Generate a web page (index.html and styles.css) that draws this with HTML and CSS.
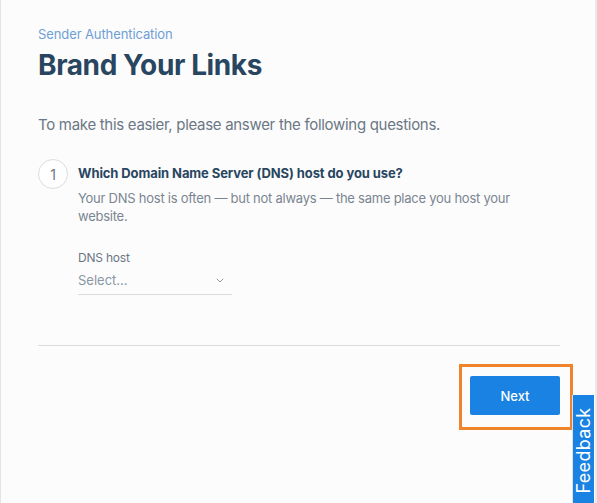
FILE: index.html
```html
<!DOCTYPE html>
<html>
<head>
<meta charset="utf-8">
<link rel="stylesheet" href="styles.css">
</head>
<body>
<div class="page">
  <main class="content">
    <div class="eyebrow">Sender Authentication</div>
    <h1 class="title">Brand Your Links</h1>
    <p class="intro">To make this easier, please answer the following questions.</p>
    <div class="step">
      <div class="step-num">1</div>
      <div class="step-body">
        <div class="question">Which Domain Name Server (DNS) host do you use?</div>
        <div class="desc">Your DNS host is often — but not always — the same place you host your website.</div>
        <div class="field">
          <div class="label">DNS host</div>
          <div class="select">
            <span>Select...</span>
            <svg class="chev" width="8" height="5" viewBox="0 0 8 5"><path d="M0.8 0.8 L4 4 L7.2 0.8" fill="none" stroke="#8a96a3" stroke-width="1"/></svg>
          </div>
        </div>
      </div>
    </div>
    <hr class="divider">
    <div class="actions">
      <div class="highlight"><button class="next">Next</button></div>
    </div>
  </main>
  <div class="feedback"><span>Feedback</span></div>
</div>
</body>
</html>
```
FILE: styles.css
```css
html, body {
  margin: 0;
  padding: 0;
  height: 100%;
}
body {
  background: #fcfcfc;
  font-family: "Inter", "Liberation Sans", sans-serif;
  overflow: hidden;
}
.page {
  position: relative;
  height: 503px;
  border-left: 1px solid #e4e4e4;
  border-right: 2px solid #e9e9e9;
  box-sizing: border-box;
}
.content {
  padding: 26px 37px 0 37px;
  width: 522px;
}
.eyebrow {
  font-size: 13px;
  color: #6f9ed6;
  line-height: 16px;
  letter-spacing: -0.1px;
}
.title {
  margin: 6px 0 0 0;
  font-size: 28px;
  line-height: 34px;
  font-weight: 700;
  color: #294661;
  letter-spacing: -0.4px;
}
.intro {
  margin: 33px 0 0 0;
  font-size: 15px;
  line-height: 20px;
  color: #6b7785;
  letter-spacing: -0.3px;
}
.step {
  display: flex;
  gap: 10px;
  margin-top: 24px;
}
.step-num {
  width: 28px;
  height: 28px;
  border: 1px solid #dcdcdc;
  border-radius: 50%;
  display: flex;
  align-items: center;
  justify-content: center;
  font-size: 14px;
  color: #6b7785;
  flex: none;
  background: #fff;
}
.step-body {
  padding-top: 6px;
  width: 440px;
}
.question {
  font-size: 13px;
  font-weight: 700;
  color: #294661;
  line-height: 16px;
  letter-spacing: -0.1px;
}
.desc {
  margin-top: 8px;
  font-size: 13px;
  line-height: 18px;
  color: #7a8591;
  letter-spacing: -0.25px;
}
.field {
  margin-top: 26px;
  width: 154px;
}
.label {
  font-size: 12px;
  line-height: 14px;
  color: #6b7785;
  letter-spacing: -0.2px;
}
.select {
  margin-top: 7px;
  display: flex;
  justify-content: space-between;
  align-items: center;
  font-size: 13px;
  color: #8a96a3;
  padding-bottom: 6px;
  border-bottom: 1px solid #dcdcdc;
}
.chev {
  margin-right: 8px;
}
.divider {
  margin: 50px 0 0 0;
  border: 0;
  border-top: 1px solid #dcdcdc;
}
.actions {
  display: flex;
  justify-content: flex-end;
  margin-top: 18px;
  margin-right: -13px;
}
.highlight {
  border: 3px solid #f0842c;
  padding: 9px 10px 12px 8px;
}
.next {
  width: 90px;
  height: 39px;
  background: #1a82e2;
  color: #fff;
  border: 0;
  border-radius: 2px;
  font-family: inherit;
  font-size: 13px;
  font-weight: 500;
}
.feedback {
  position: absolute;
  left: 571px;
  top: 395px;
  width: 21px;
  height: 108px;
  background: #1a82e2;
  border-left: 1px solid #e0e0e0;
  display: flex;
  align-items: center;
  justify-content: center;
}
.feedback span {
  transform: rotate(-90deg);
  color: #fff;
  font-size: 18px;
  white-space: nowrap;
  letter-spacing: 0.3px;
  margin-top: 2px;
}
```
